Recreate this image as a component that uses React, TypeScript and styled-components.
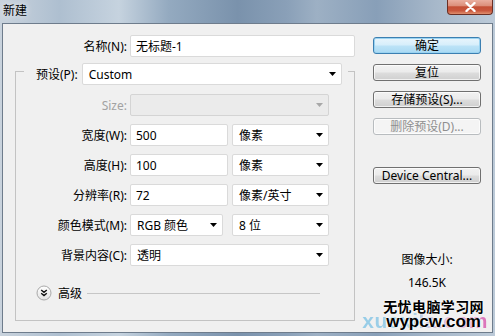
import styled, { createGlobalStyle } from 'styled-components'

const GlobalStyle = createGlobalStyle`
  html, body {
    margin: 0;
    padding: 0;
    background: #f0f0f0;
  }
  body {
    font-family: "Noto Sans", "Noto Sans CJK SC", sans-serif;
    font-size: 12px;
    color: #000;
  }
`

const glass = `linear-gradient(90deg,
  #c9d3dd 0%, #aebfd0 12%, #c6d3df 24%, #94aac0 34%,
  #7a92ac 48%, #8aa0b8 58%, #9db0c4 64%, #889fb8 76%,
  #a7b8ca 88%, #bccad8 100%)`

const Window = styled.div`
  width: 495px;
  height: 336px;
  box-sizing: border-box;
  display: flex;
  flex-direction: column;
  padding: 0 2px 3px 2px;
  background: ${glass};
  overflow: hidden;
`

const TitleBar = styled.div`
  height: 23px;
  flex-shrink: 0;
  margin: 0 -2px;
  padding: 0 2px 0 3px;
  display: flex;
  align-items: flex-start;
  justify-content: space-between;
`

const Title = styled.div`
  margin-top: 4px;
  font-size: 12px;
  line-height: 13px;
  text-shadow: 0 0 6px rgba(255, 255, 255, 0.9);
`

const CloseButton = styled.div`
  width: 46px;
  height: 16px;
  margin-top: -1px;
  box-sizing: border-box;
  border: 1px solid #6b2f24;
  border-top: none;
  border-radius: 0 0 4px 4px;
  background: linear-gradient(#ecb4a6 0%, #dc8f7b 45%, #c44f36 52%, #c9573d 78%, #e0906f 100%);
  display: flex;
  align-items: center;
  justify-content: center;
`

const Client = styled.div`
  flex: 1;
  position: relative;
  display: flex;
  gap: 18px;
  padding: 11px 11px 0 12px;
  border: 1px solid #6e7c8c;
  background: #f0f0f0;
  overflow: hidden;
`

const FormColumn = styled.div`
  width: 340px;
  flex-shrink: 0;
  display: flex;
  flex-direction: column;
`

const Row = styled.div`
  height: 22px;
  display: flex;
  align-items: center;
  gap: 3px;
`

const Label = styled.div<{ $width?: number; $muted?: boolean }>`
  width: ${p => (p.$width ? `${p.$width}px` : 'auto')};
  flex-shrink: 0;
  text-align: right;
  white-space: nowrap;
  color: ${p => (p.$muted ? '#a2a2a2' : '#000')};
`

const TextBox = styled.div<{ $width: number }>`
  width: ${p => p.$width}px;
  height: 22px;
  box-sizing: border-box;
  padding: 0 5px;
  display: flex;
  align-items: center;
  background: #fff;
  border: 1px solid #dadada;
  border-radius: 2px;
  white-space: nowrap;
`

const SelectBox = styled.div<{ $width?: number; $disabled?: boolean }>`
  width: ${p => (p.$width ? `${p.$width}px` : 'auto')};
  flex: ${p => (p.$width ? '0 0 auto' : '1')};
  height: 22px;
  box-sizing: border-box;
  padding: 0 5px 0 6px;
  display: flex;
  align-items: center;
  justify-content: space-between;
  background: ${p => (p.$disabled ? '#ebebeb' : '#fff')};
  border: 1px solid ${p => (p.$disabled ? '#d4d4d4' : '#dadada')};
  border-radius: 2px;
  white-space: nowrap;
`

// value field + unit field; the unit always starts at the same column
const Pair = styled.div`
  display: grid;
  grid-template-columns: 98px 97px;
  column-gap: 4px;
`

const GroupBox = styled.div`
  margin-top: 14px;
  height: 250px;
  box-sizing: border-box;
  border: 1px solid #c3c3c3;
  display: flex;
  flex-direction: column;
`

const PresetRow = styled.div`
  height: 22px;
  margin: -9px 6px 0 8px;
  padding: 0 6px 0 12px;
  display: flex;
  align-items: center;
  gap: 4px;
  background: #f0f0f0;
`

const FieldRows = styled.div`
  margin-top: 9px;
  display: flex;
  flex-direction: column;
  gap: 8px;
`

const AdvancedRow = styled.div`
  margin-top: 19px;
  padding-left: 20px;
  height: 16px;
  display: flex;
  align-items: center;
  gap: 6px;
`

const Rule = styled.div`
  flex: 1;
  height: 0;
  margin: 0 34px 0 -1px;
  border-top: 1px solid #c6c6c6;
`

const ButtonColumn = styled.div`
  width: 108px;
  flex-shrink: 0;
  padding-top: 2px;
  display: flex;
  flex-direction: column;
`

const ButtonStack = styled.div<{ $offset?: number }>`
  margin-top: ${p => p.$offset ?? 0}px;
  display: flex;
  flex-direction: column;
  gap: 10px;
`

const Button = styled.div<{ $variant?: 'default' | 'normal' | 'disabled' }>`
  height: 17px;
  box-sizing: border-box;
  border-radius: 3px;
  font-size: 12px;
  line-height: 15px;
  text-align: center;
  white-space: nowrap;
  border: 1px solid
    ${p => (p.$variant === 'default' ? '#3c7fb1' : p.$variant === 'disabled' ? '#b8bcbf' : '#707070')};
  color: ${p => (p.$variant === 'disabled' ? '#8f8f8f' : '#000')};
  background: ${p =>
    p.$variant === 'default'
      ? 'linear-gradient(#e9f5fc 0%, #d6eefb 48%, #bde3f7 52%, #a9d9f3 100%)'
      : p.$variant === 'disabled'
        ? '#f4f4f4'
        : 'linear-gradient(#f2f2f2 0%, #ebebeb 48%, #dddddd 52%, #cfcfcf 100%)'};
  box-shadow: ${p => (p.$variant === 'default' ? 'inset 0 0 0 1px #9ad3f1' : 'inset 0 0 0 1px rgba(255,255,255,0.7)')};
`

const ImageSize = styled.div`
  margin-top: 68px;
  display: flex;
  flex-direction: column;
  align-items: center;
  gap: 7px;
  line-height: 16px;
`

const Watermark = styled.div`
  position: absolute;
  right: 8px;
  bottom: 3px;
  display: flex;
  flex-direction: column;
  align-items: center;
  font-family: "Liberation Sans", "Noto Sans CJK SC", sans-serif;
  font-weight: bold;
  pointer-events: none;
`

const WatermarkBack = styled.div`
  position: absolute;
  right: -4px;
  bottom: -4px;
  font-family: "Liberation Sans", sans-serif;
  font-size: 21px;
  font-weight: bold;
  letter-spacing: 0.5px;
  background: linear-gradient(90deg, #86c6e6 0%, #9ccfe8 40%, #e4a0d0 70%, #d85cb0 100%);
  -webkit-background-clip: text;
  background-clip: text;
  color: transparent;
  opacity: 0.85;
`

const WatermarkCn = styled.div`
  position: relative;
  font-size: 14px;
  line-height: 15px;
  letter-spacing: 0.4px;
  text-shadow: 0 0 2px #fff, 0 0 2px #fff;
`

const WatermarkUrl = styled.div`
  position: relative;
  font-size: 17px;
  line-height: 14px;
  text-shadow: 0 0 2px #fff, 0 0 2px #fff;
`

const Arrow = ({ muted }: { muted?: boolean }) => (
  <svg width="7" height="4" viewBox="0 0 7 4">
    <polygon points="0,0 7,0 3.5,4" fill={muted ? '#a8a8a8' : '#000'} />
  </svg>
)

const Select = ({ value, width, disabled }: { value?: string; width?: number; disabled?: boolean }) => (
  <SelectBox $width={width} $disabled={disabled}>
    <span>{value}</span>
    <Arrow muted={disabled} />
  </SelectBox>
)

const ExpandIcon = () => (
  <svg width="16" height="16" viewBox="0 0 16 16">
    <defs>
      <linearGradient id="exp" x1="0" y1="0" x2="0" y2="1">
        <stop offset="0" stopColor="#ffffff" />
        <stop offset="1" stopColor="#e2e2e2" />
      </linearGradient>
    </defs>
    <circle cx="8" cy="8" r="7" fill="url(#exp)" stroke="#a9a9a9" />
    <path d="M5.2 5 L8 7.4 L10.8 5 M5.2 8.2 L8 10.6 L10.8 8.2" fill="none" stroke="#111" strokeWidth="1.4" />
  </svg>
)

const CloseGlyph = () => (
  <svg width="11" height="10" viewBox="0 0 11 10">
    <path d="M1.5 1 L9.5 9 M9.5 1 L1.5 9" stroke="#fff" strokeWidth="2.4" strokeLinecap="round" />
  </svg>
)

export default function App() {
  return (
    <>
      <GlobalStyle />
      <Window>
        <TitleBar>
          <Title>新建</Title>
          <CloseButton>
            <CloseGlyph />
          </CloseButton>
        </TitleBar>
        <Client>
          <FormColumn>
            <Row>
              <Label $width={112}>名称(N):</Label>
              <TextBox $width={225}>无标题-1</TextBox>
            </Row>
            <GroupBox>
              <PresetRow>
                <Label>预设(P):</Label>
                <Select value="Custom" />
              </PresetRow>
              <FieldRows>
                <Row>
                  <Label $width={111} $muted>Size:</Label>
                  <Select width={199} disabled />
                </Row>
                <Row>
                  <Label $width={111}>宽度(W):</Label>
                  <Pair>
                    <TextBox $width={98}>500</TextBox>
                    <Select value="像素" width={97} />
                  </Pair>
                </Row>
                <Row>
                  <Label $width={111}>高度(H):</Label>
                  <Pair>
                    <TextBox $width={98}>100</TextBox>
                    <Select value="像素" width={97} />
                  </Pair>
                </Row>
                <Row>
                  <Label $width={111}>分辨率(R):</Label>
                  <Pair>
                    <TextBox $width={98}>72</TextBox>
                    <Select value="像素/英寸" width={97} />
                  </Pair>
                </Row>
                <Row>
                  <Label $width={111}>颜色模式(M):</Label>
                  <Pair>
                    <Select value="RGB 颜色" width={93} />
                    <Select value="8 位" width={97} />
                  </Pair>
                </Row>
                <Row>
                  <Label $width={111}>背景内容(C):</Label>
                  <Select value="透明" width={199} />
                </Row>
              </FieldRows>
              <AdvancedRow>
                <ExpandIcon />
                <span>高级</span>
                <Rule />
              </AdvancedRow>
            </GroupBox>
          </FormColumn>
          <ButtonColumn>
            <ButtonStack>
              <Button $variant="default">确定</Button>
              <Button>复位</Button>
              <Button>存储预设(S)...</Button>
              <Button $variant="disabled">删除预设(D)...</Button>
            </ButtonStack>
            <ButtonStack $offset={32}>
              <Button>Device Central...</Button>
            </ButtonStack>
            <ImageSize>
              <span>图像大小:</span>
              <span>146.5K</span>
            </ImageSize>
          </ButtonColumn>
          <Watermark>
            <WatermarkBack>xuexila.com</WatermarkBack>
            <WatermarkCn>无忧电脑学习网</WatermarkCn>
            <WatermarkUrl>wypcw.com</WatermarkUrl>
          </Watermark>
        </Client>
      </Window>
    </>
  )
}
